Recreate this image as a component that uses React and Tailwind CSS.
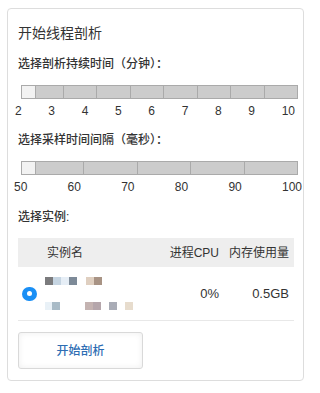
import React from "react";

const FONT = { fontFamily: '"Liberation Sans", "Noto Sans CJK SC", Arial, sans-serif' };

function Slider({ firstW, segs, labels }) {
  return (
    <div className="flex flex-col">
      <div className="relative ml-[3px] w-[277px] h-[14px] flex border border-[#aaaaaa] bg-[#cccccc] box-border">
        <div className="h-full" style={{ width: firstW }} />
        {Array.from({ length: segs }).map((_, i) => (
          <div key={i} className="flex-1 h-full border-l border-[#aaaaaa]" />
        ))}
        <div className="absolute left-[-1px] top-[-1px] w-[15px] h-[14px] bg-[#f2f2f2] border border-[#aaaaaa] box-border" />
      </div>
      {labels}
    </div>
  );
}

function Block({ c, w = 8 }) {
  return <div className="h-[8px]" style={{ width: w, background: c }} />;
}

export default function App() {
  return (
    <div className="w-[314px] h-[393px] bg-white pl-[7px] pt-[8px]" style={FONT}>
      <div className="w-[297px] h-[373px] border border-[#dddddd] rounded-[4px] pt-[14px] pl-[10px] pr-[9px] flex flex-col text-[#333333]">
        <div className="text-[14px] leading-[20px] h-[20px]">开始线程剖析</div>

        <div className="mt-[12px] text-[12px] leading-[18px] h-[18px] font-medium">选择剖析持续时间（分钟）：</div>
        <div className="mt-[12px]">
          <Slider
            firstW={41}
            segs={7}
            labels={
              <div className="mt-[4px] ml-[-3px] w-[280px] flex justify-between text-[12px] leading-[16px] text-[#333]">
                {["2", "3", "4", "5", "6", "7", "8", "9", "10"].map((l) => (
                  <span key={l}>{l}</span>
                ))}
              </div>
            }
          />
        </div>

        <div className="mt-[12px] text-[12px] leading-[18px] h-[18px] font-medium">选择采样时间间隔（毫秒）：</div>
        <div className="mt-[12px]">
          <Slider
            firstW={61}
            segs={4}
            labels={
              <div className="mt-[4px] ml-[-4px] w-[288px] flex justify-between text-[12px] leading-[16px] text-[#333]">
                {["50", "60", "70", "80", "90", "100"].map((l) => (
                  <span key={l}>{l}</span>
                ))}
              </div>
            }
          />
        </div>

        <div className="mt-[13px] text-[12px] leading-[18px] h-[18px] font-medium">选择实例:</div>

        <div className="mt-[12px] w-[276px] text-[12px]">
          <div className="h-[29px] bg-[#eeeeee] flex items-center">
            <div className="w-[29px]" />
            <div className="flex-1">实例名</div>
            <div className="w-[60px] text-right">进程CPU</div>
            <div className="w-[75px] text-right pr-[5px]">内存使用量</div>
          </div>
          <div className="h-[54px] border-b border-[#e8e8e8] flex items-center">
            <div className="w-[27px] pl-[4px]">
              <div className="w-[15px] h-[14px] rounded-full bg-[#1a8ff5] flex items-center justify-center">
                <div className="w-[5px] h-[5px] rounded-full bg-white" />
              </div>
            </div>
            <div className="flex-1 flex flex-col gap-[17px]">
              <div className="flex">
                <Block c="#7b7b7d" />
                <Block c="#c6d5e2" />
                <Block c="#e6eef6" />
                <Block c="#7d8a98" />
                <div className="w-[9px]" />
                <Block c="#dfcfc0" />
                <Block c="#a89384" />
              </div>
              <div className="flex">
                <Block c="#e9f1f7" w={7} />
                <Block c="#a9bbc7" />
                <div className="w-[25px]" />
                <Block c="#c4b3b1" />
                <Block c="#b5a6ab" />
                <div className="w-[8px]" />
                <Block c="#a9acb6" />
                <div className="w-[8px]" />
                <Block c="#e7dccd" />
              </div>
            </div>
            <div className="w-[60px] text-right text-[13px]">0%</div>
            <div className="w-[75px] text-right pr-[5px] text-[13px]">0.5GB</div>
          </div>
        </div>

        <div className="mt-[11px] w-[125px] h-[37px] border border-[#d9d9d9] rounded-[3px] bg-white shadow-[inset_0_0_6px_rgba(0,0,0,0.07)] flex items-center justify-center text-[12px] font-medium text-[#2d6db3]">
          开始剖析
        </div>
      </div>
    </div>
  );
}
